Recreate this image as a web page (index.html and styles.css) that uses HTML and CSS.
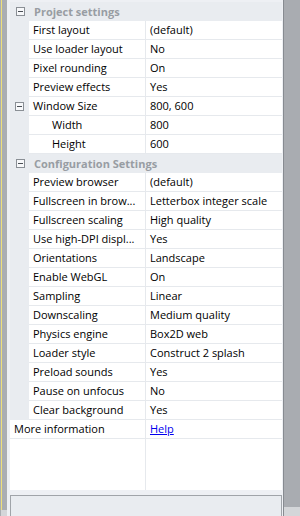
FILE: index.html
```html
<!DOCTYPE html>
<html lang="en">

<head>
  <meta charset="UTF-8">
  <meta name="viewport" content="width=device-width, initial-scale=1.0">
  <title>Properties</title>
  <link rel="stylesheet" href="styles.css">
</head>

<body>
  <div class="frame">
    <div class="edge-left"></div>

    <div class="panel">
      <div class="grid">
        <div class="category">
          <span class="toggle"><svg width="9" height="9" viewBox="0 0 9 9"><rect x="0.5" y="0.5" width="8" height="8" fill="#f7f8fa" stroke="#8a8f95"/><path d="M2 4.5h5" stroke="#4a4f55"/></svg></span>
          <span class="category-name">Project settings</span>
        </div>
        <div class="row"><span class="gutter"></span><span class="name">First layout</span><span class="value">(default)</span></div>
        <div class="row"><span class="gutter"></span><span class="name">Use loader layout</span><span class="value">No</span></div>
        <div class="row"><span class="gutter"></span><span class="name">Pixel rounding</span><span class="value">On</span></div>
        <div class="row"><span class="gutter"></span><span class="name">Preview effects</span><span class="value">Yes</span></div>
        <div class="row">
          <span class="gutter"><svg width="9" height="9" viewBox="0 0 9 9"><rect x="0.5" y="0.5" width="8" height="8" fill="#f7f8fa" stroke="#8a8f95"/><path d="M2 4.5h5" stroke="#4a4f55"/></svg></span>
          <span class="name">Window Size</span><span class="value">800, 600</span>
        </div>
        <div class="row"><span class="gutter"></span><span class="name sub">Width</span><span class="value">800</span></div>
        <div class="row"><span class="gutter"></span><span class="name sub">Height</span><span class="value">600</span></div>

        <div class="category">
          <span class="toggle"><svg width="9" height="9" viewBox="0 0 9 9"><rect x="0.5" y="0.5" width="8" height="8" fill="#f7f8fa" stroke="#8a8f95"/><path d="M2 4.5h5" stroke="#4a4f55"/></svg></span>
          <span class="category-name">Configuration Settings</span>
        </div>
        <div class="row"><span class="gutter"></span><span class="name">Preview browser</span><span class="value">(default)</span></div>
        <div class="row"><span class="gutter"></span><span class="name">Fullscreen in brow...</span><span class="value">Letterbox integer scale</span></div>
        <div class="row"><span class="gutter"></span><span class="name">Fullscreen scaling</span><span class="value">High quality</span></div>
        <div class="row"><span class="gutter"></span><span class="name">Use high-DPI displ...</span><span class="value">Yes</span></div>
        <div class="row"><span class="gutter"></span><span class="name">Orientations</span><span class="value">Landscape</span></div>
        <div class="row"><span class="gutter"></span><span class="name">Enable WebGL</span><span class="value">On</span></div>
        <div class="row"><span class="gutter"></span><span class="name">Sampling</span><span class="value">Linear</span></div>
        <div class="row"><span class="gutter"></span><span class="name">Downscaling</span><span class="value">Medium quality</span></div>
        <div class="row"><span class="gutter"></span><span class="name">Physics engine</span><span class="value">Box2D web</span></div>
        <div class="row"><span class="gutter"></span><span class="name">Loader style</span><span class="value">Construct 2 splash</span></div>
        <div class="row"><span class="gutter"></span><span class="name">Preload sounds</span><span class="value">Yes</span></div>
        <div class="row"><span class="gutter"></span><span class="name">Pause on unfocus</span><span class="value">No</span></div>
        <div class="row"><span class="gutter"></span><span class="name">Clear background</span><span class="value">Yes</span></div>

        <div class="row top-level"><span class="name">More information</span><span class="value"><a href="#">Help</a></span></div>

        <div class="filler"><span class="filler-name"></span><span class="filler-value"></span></div>
      </div>

      <div class="description"></div>
    </div>

    <div class="edge-right"></div>
  </div>
</body>

</html>
```

FILE: styles.css
```css
html,
body {
  margin: 0;
  height: 100%;
}

body {
  font-family: "Open Sans", "Noto Sans", sans-serif;
  font-size: 11px;
  color: #000;
  background-color: #abaeb3;
  overflow: hidden;
}

.frame {
  display: flex;
  height: 516px;
}

.edge-left {
  width: 6px;
  border-left: 1px solid #abaeb3;
  background: linear-gradient(to right, #efe07a 0, #efe07a 1px, #abaeb3 1px);
  background-size: 100% 510px;
  background-repeat: no-repeat;
  background-color: #d4d6d9;
}

.edge-right {
  width: 16px;
  background: linear-gradient(to bottom, #a9acb1 0, #a9acb1 507px, #d4d6d9 507px);
}

.panel {
  width: 273px;
  padding: 2px 1px 0 3px;
  border-right: 1px solid #878b91;
  background-color: #eef0f4;
  display: flex;
  flex-direction: column;
}

.grid {
  width: 272px;
  height: 488px;
  flex: none;
  background-color: #fff;
  display: flex;
  flex-direction: column;
}

.category {
  display: flex;
  align-items: center;
  flex: none;
  height: 18px;
  border-bottom: 1px solid #e9ecf0;
  background-color: #e9ecf0;
}

.toggle {
  width: 19px;
  display: flex;
  justify-content: center;
  padding-left: 1px;
}

.toggle svg,
.gutter svg {
  display: block;
}

.category-name {
  padding-left: 4px;
  font-weight: bold;
  color: #989da3;
}

.row {
  display: flex;
  flex: none;
  height: 19px;
  line-height: 18px;
}

.gutter {
  width: 19px;
  flex: none;
  background-color: #e9ecf0;
  display: flex;
  align-items: center;
  justify-content: center;
  padding-left: 1px;
  box-sizing: border-box;
}

.name {
  width: 112px;
  flex: none;
  padding-left: 4px;
  border-right: 1px solid #e6e9ed;
  border-bottom: 1px solid #e6e9ed;
  white-space: nowrap;
  overflow: hidden;
}

.name.sub {
  padding-left: 23px;
  width: 93px;
}

.value {
  flex: 1;
  padding-left: 4px;
  border-bottom: 1px solid #e6e9ed;
  white-space: nowrap;
  overflow: hidden;
}

.top-level .name {
  width: 131px;
}

a {
  color: #0000ee;
  text-decoration: underline;
}

.filler {
  flex: 1;
  display: flex;
}

.filler-name {
  width: 135px;
  border-right: 1px solid #e6e9ed;
}

.description {
  margin-top: 5px;
  flex: 1;
  border: 1px solid #a0a4a9;
  border-bottom: 0;
  background-color: #e9ecf0;
  width: 270px;
}
```
